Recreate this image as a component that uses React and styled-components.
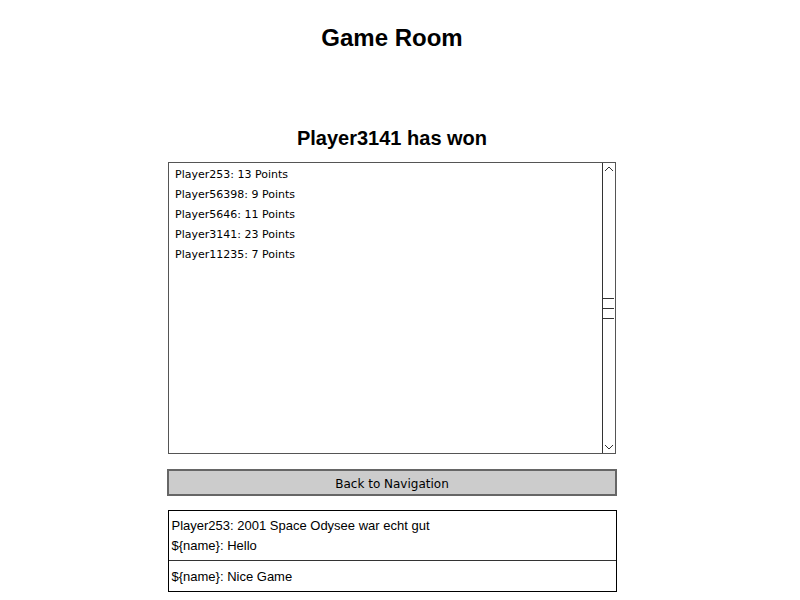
import styled, { createGlobalStyle } from "styled-components";

const players = [
  "Player253: 13 Points",
  "Player56398: 9 Points",
  "Player5646: 11 Points",
  "Player3141: 23 Points",
  "Player11235: 7 Points",
];

const messages = ["Player253: 2001 Space Odysee war echt gut", "${name}: Hello"];

const GameRoom = () => {
  return (
    <Page>
      <Title>Game Room</Title>
      <Winner>Player3141 has won</Winner>
      <ScoreList>
        <Items>
          {players.map((p) => (
            <Item key={p}>{p}</Item>
          ))}
        </Items>
        <Scrollbar>
          <Arrow>
            <svg width="10" height="8" viewBox="0 0 10 8">
              <path d="M1 6 L5 2 L9 6" fill="none" stroke="#333" strokeWidth="1" />
            </svg>
          </Arrow>
          <Grip>
            <span />
            <span />
            <span />
          </Grip>
          <Arrow>
            <svg width="10" height="8" viewBox="0 0 10 8">
              <path d="M1 2 L5 6 L9 2" fill="none" stroke="#333" strokeWidth="1" />
            </svg>
          </Arrow>
        </Scrollbar>
      </ScoreList>
      <BackButton>Back to Navigation</BackButton>
      <Chat>
        <ChatLog>
          {messages.map((m) => (
            <ChatLine key={m}>{m}</ChatLine>
          ))}
        </ChatLog>
        <ChatInput>{"${name}: Nice Game"}</ChatInput>
      </Chat>
    </Page>
  );
};

const GlobalStyle = createGlobalStyle`
  html, body {
    margin: 0;
    padding: 0;
    background: #fff;
  }
  body {
    font-family: "Liberation Sans", Arial, sans-serif;
    color: #000;
  }
`;

const Page = styled.div`
  width: 784px;
  display: flex;
  flex-direction: column;
  align-items: center;
  padding-top: 24px;
`;

const Title = styled.h1`
  margin: 0;
  font-size: 24px;
  line-height: 28px;
  font-weight: bold;
`;

const Winner = styled.h2`
  margin: 74px 0 0;
  font-size: 20px;
  line-height: 24px;
  font-weight: bold;
`;

const ScoreList = styled.div`
  margin-top: 12px;
  width: 448px;
  height: 292px;
  box-sizing: border-box;
  border: 1px solid #555;
  display: flex;
`;

const Items = styled.div`
  flex: 1;
  padding: 2px 6px;
`;

const Item = styled.div`
  font-family: "DejaVu Sans", sans-serif;
  font-size: 11px;
  line-height: 20px;
`;

const Scrollbar = styled.div`
  width: 12px;
  border-left: 1px solid #333;
  display: flex;
  flex-direction: column;
  justify-content: space-between;
  align-items: center;
`;

const Arrow = styled.div`
  height: 12px;
  display: flex;
  align-items: center;
  justify-content: center;
`;

const Grip = styled.div`
  display: flex;
  flex-direction: column;
  gap: 9px;
  width: 100%;
  span {
    display: block;
    width: 11px;
    height: 1px;
    background: #333;
  }
`;

const BackButton = styled.div`
  margin-top: 15px;
  width: 450px;
  height: 27px;
  padding-top: 2px;
  box-sizing: border-box;
  border: 2px solid #666;
  background: #ccc;
  font-family: "DejaVu Sans", sans-serif;
  font-size: 12px;
  display: flex;
  align-items: center;
  justify-content: center;
`;

const Chat = styled.div`
  margin-top: 14px;
  width: 449px;
  box-sizing: border-box;
  border: 1px solid #000;
`;

const ChatLog = styled.div`
  height: 50px;
  padding: 5px 3px 0;
  box-sizing: border-box;
  border-bottom: 1px solid #333;
`;

const ChatLine = styled.div`
  font-size: 13px;
  line-height: 20px;
`;

const ChatInput = styled.div`
  height: 30px;
  padding: 4px 3px 0;
  box-sizing: border-box;
  font-size: 13px;
  line-height: 24px;
`;

export default function App() {
  return (
    <>
      <GlobalStyle />
      <GameRoom />
    </>
  );
}
